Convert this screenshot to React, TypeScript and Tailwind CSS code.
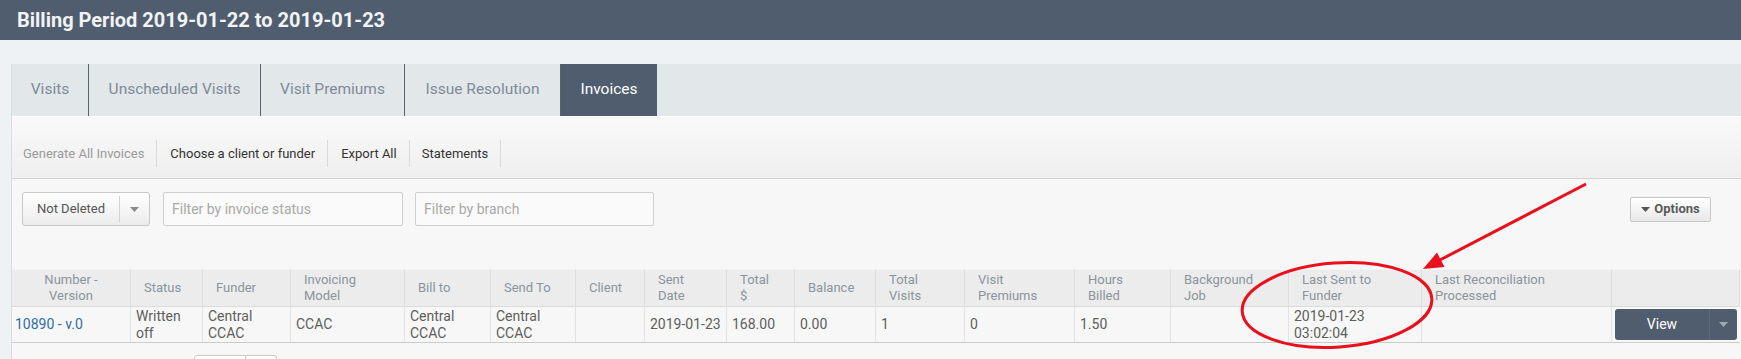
import React from 'react';

interface Header {
  lines: string[];
  center?: boolean;
}

const gridCols =
  'grid grid-cols-[119px_72px_88px_114px_86px_85px_69px_82px_68px_81px_89px_110px_96px_118px_133px_190px_128px]';

const headers: Header[] = [
  { lines: ['Number -', 'Version'], center: true },
  { lines: ['Status'] },
  { lines: ['Funder'] },
  { lines: ['Invoicing', 'Model'] },
  { lines: ['Bill to'] },
  { lines: ['Send To'] },
  { lines: ['Client'] },
  { lines: ['Sent', 'Date'] },
  { lines: ['Total', '$'] },
  { lines: ['Balance'] },
  { lines: ['Total', 'Visits'] },
  { lines: ['Visit', 'Premiums'] },
  { lines: ['Hours', 'Billed'] },
  { lines: ['Background', 'Job'] },
  { lines: ['Last Sent to', 'Funder'] },
  { lines: ['Last Reconciliation', 'Processed'] },
  { lines: [] },
];

const row: string[][] = [
  ['Written', 'off'],
  ['Central', 'CCAC'],
  ['CCAC'],
  ['Central', 'CCAC'],
  ['Central', 'CCAC'],
  [],
  ['2019-01-23'],
  ['168.00'],
  ['0.00'],
  ['1'],
  ['0'],
  ['1.50'],
  [],
  ['2019-01-23', '03:02:04'],
  [],
];

const tabs = [
  { label: 'Visits', w: 'w-[77px]' },
  { label: 'Unscheduled Visits', w: 'w-[172px]' },
  { label: 'Visit Premiums', w: 'w-[144px]' },
  { label: 'Issue Resolution', w: 'w-[156px]' },
];

const Caret = ({ className }: { className?: string }) => (
  <svg width="9" height="5" viewBox="0 0 9 5" className={className}>
    <path d="M0 0 L9 0 L4.5 5 Z" fill="currentColor" />
  </svg>
);

export default function App() {
  return (
    <div className="relative min-h-screen overflow-hidden bg-[#eef2f5] font-['Roboto','Liberation_Sans',sans-serif]">
      {/* Page title */}
      <div className="flex h-[40px] items-center bg-[#4f5d6e] pl-[17px] text-[20px] font-bold text-[#f1f3f5]">
        Billing Period 2019-01-22 to 2019-01-23
      </div>

      <div className="pl-[11px] pt-[24px]">
        <div className="overflow-hidden border-l border-[#d8dde2] bg-[#f7f7f7]">
          {/* Tabs */}
          <div className="flex h-[52px] bg-[#e2e7ea]">
            {tabs.map((t) => (
              <div
                key={t.label}
                className={`flex ${t.w} items-center justify-center border-r border-[#56636f] text-[15.5px] text-[#7e8b98]`}
              >
                {t.label}
              </div>
            ))}
            <div className="flex w-[96px] items-center justify-center bg-[#4f5d6e] text-[15.5px] text-white">
              Invoices
            </div>
          </div>

          {/* Toolbar */}
          <div className="flex h-[63px] items-end border-t border-b border-t-white border-b-[#d2d2d2] bg-gradient-to-b from-[#f9f9f9] to-[#efefef] pb-[11px]">
            <div className="flex h-[27px] items-center border-r border-[#d9d9d9] pl-[11px] pr-[12px] text-[13px] text-[#9a9a9a]">
              Generate All Invoices
            </div>
            <div className="flex h-[27px] items-center border-r border-[#d9d9d9] pl-[13px] pr-[12px] text-[13px] text-[#333]">
              Choose a client or funder
            </div>
            <div className="flex h-[27px] items-center border-r border-[#d9d9d9] pl-[13px] pr-[12px] text-[13px] text-[#333]">
              Export All
            </div>
            <div className="flex h-[27px] items-center border-r border-[#d9d9d9] px-[12px] text-[13px] text-[#333]">
              Statements
            </div>
          </div>

          {/* Filters */}
          <div className="h-[90px] px-[10px] pt-[13px]">
            <div className="flex h-[34px] items-center">
              <div className="flex h-[34px] w-[128px] items-center rounded-[3px] border border-[#c8c8c8] bg-gradient-to-b from-white to-[#ececec]">
                <span className="flex-1 text-center text-[13px] text-[#555]">Not Deleted</span>
                <span className="h-[26px] w-px bg-[#d3d3d3]" />
                <span className="flex w-[29px] items-center justify-center text-[#8a8a8a]">
                  <Caret />
                </span>
              </div>
              <input
                readOnly
                placeholder="Filter by invoice status"
                className="ml-[13px] h-[34px] w-[240px] rounded-[2px] border border-[#cfcfcf] bg-[#fafafa] pl-[8px] text-[14px] outline-none placeholder:text-[#a9a9a9]"
              />
              <input
                readOnly
                placeholder="Filter by branch"
                className="ml-[12px] h-[34px] w-[239px] rounded-[2px] border border-[#cfcfcf] bg-[#fafafa] pl-[8px] text-[14px] outline-none placeholder:text-[#a9a9a9]"
              />
              <button className="ml-auto mr-[20px] flex h-[25px] w-[81px] items-center justify-center gap-[4px] rounded-[2px] border border-[#c6c6c6] bg-gradient-to-b from-white to-[#e8e8e8] text-[13px] font-bold text-[#5a5a5a]">
                <Caret className="text-[#555]" />
                Options
              </button>
            </div>
          </div>

          {/* Invoices table */}
          <div className={gridCols}>
            {headers.map((h, i) => (
              <div
                key={i}
                className={`flex h-[38px] flex-col justify-center border-t border-r border-b border-t-[#f4f4f4] border-r-[#dedede] border-b-[#dcdcdc] bg-[#ececec] text-[13px] leading-[16px] text-[#8b949c] ${
                  h.center ? 'items-center text-center' : 'pl-[13px]'
                }`}
              >
                {h.lines.map((l) => (
                  <span key={l} className="whitespace-nowrap">
                    {l}
                  </span>
                ))}
              </div>
            ))}

            <div className="flex h-[36px] items-center border-r border-b border-r-[#e2e2e2] border-b-[#cccccc] pl-[3px] text-[14px] text-[#2f6ca6]">
              10890 - v.0
            </div>
            {row.map((lines, i) => (
              <div
                key={i}
                className="flex h-[36px] flex-col justify-center border-r border-b border-r-[#e2e2e2] border-b-[#cccccc] pl-[5px] text-[14px] leading-[17px] text-[#5e5e5e]"
              >
                {lines.map((l) => (
                  <span key={l} className="whitespace-nowrap">
                    {l}
                  </span>
                ))}
              </div>
            ))}
            <div className="flex h-[36px] items-center border-b border-[#cccccc] pl-[3px]">
              <div className="flex h-[31px] w-[122px] items-center rounded-[3px] bg-[#4f5d6e] text-[14px] text-white">
                <span className="flex-1 text-center">View</span>
                <span className="h-[31px] w-px bg-[#5d6a7a]" />
                <span className="flex w-[27px] items-center justify-center text-[#9ea8b3]">
                  <Caret />
                </span>
              </div>
            </div>
          </div>

          {/* Paging */}
          <div className="ml-[182px] mt-[12px] flex h-[30px]">
            <div className="w-[52px] rounded-l-[3px] border border-[#cccccc] bg-white" />
            <div className="w-[31px] rounded-r-[3px] border-y border-r border-[#cccccc] bg-white" />
          </div>
          <div className="h-[20px]" />
        </div>
      </div>

      {/* Red annotation drawn over the screenshot */}
      <svg className="pointer-events-none absolute left-0 top-0" width="1741" height="359">
        <ellipse
          cx="1337"
          cy="305"
          rx="95"
          ry="42"
          transform="rotate(-4 1337 305)"
          fill="none"
          stroke="#e8101c"
          strokeWidth="3"
        />
        <line x1="1586" y1="184" x2="1438" y2="261" stroke="#e8101c" strokeWidth="3" />
        <polygon points="1423,269 1444.5,267 1437,252.5" fill="#e8101c" />
      </svg>
    </div>
  );
}
